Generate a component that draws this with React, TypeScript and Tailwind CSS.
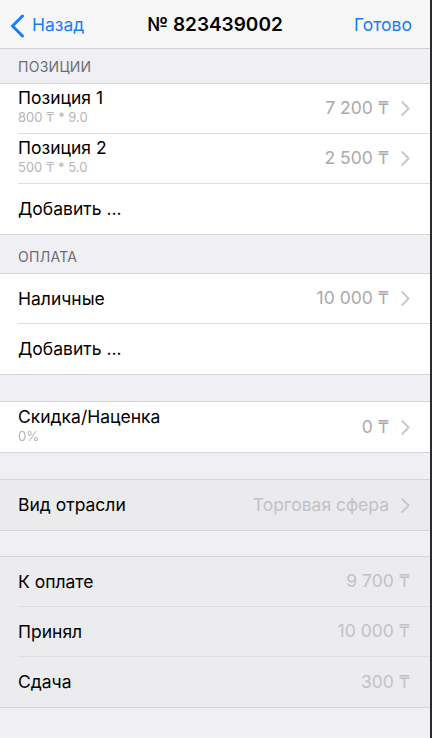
type Row = {
    title: string;
    subtitle?: string;
    value?: string;
    chevron?: boolean;
};

const Chevron = () => (
    <svg width="9" height="15" viewBox="0 0 9 15" className="ml-[12px] shrink-0" fill="none">
        <polyline points="1.2,1 7.6,7.5 1.2,14" stroke="#c7c7cc" strokeWidth="1.8" strokeLinecap="round" strokeLinejoin="round" />
    </svg>
);

const SectionHeader = ({ label, height }: { label: string; height: string }) => (
    <div className={`${height} flex items-end pb-[8px] px-[18px] text-[14px] leading-[17px] text-[#6d6d72] tracking-[0.02em]`}>
        {label}
    </div>
);

const Group = ({ rows, muted, bg = 'bg-white' }: { rows: Row[]; muted?: boolean; bg?: string }) => (
    <div className={`${bg} border-y border-[#d6d6da]`}>
        {rows.map((row, i) => (
            <div key={row.title + i} className="pl-[18px]">
                <div
                    className={`h-[50px] flex items-center pr-[20px] ${i < rows.length - 1 ? 'border-b border-[#dedee2]' : ''}`}
                >
                    <div className={`flex-1 min-w-0 ${row.subtitle ? 'pb-[4px]' : ''}`}>
                        <div className="text-[17.5px] leading-[20px] text-black">{row.title}</div>
                        {row.subtitle && (
                            <div className="mt-[2px] text-[13px] leading-[15px] text-[#b6b6ba]">{row.subtitle}</div>
                        )}
                    </div>
                    {row.value && (
                        <div className={`text-[17.5px] ${muted ? 'text-[#c2c2c6]' : 'text-[#a9a9ae]'}`}>{row.value}</div>
                    )}
                    {row.chevron && <Chevron />}
                </div>
            </div>
        ))}
    </div>
);

export default function App() {
    return (
        <div
            className="w-[432px] h-[738px] bg-[#efeff4] overflow-hidden border-r-2 border-[#2a2a2a]"
            style={{ fontFamily: "Inter, 'Noto Sans', sans-serif" }}
        >
            {/* Navigation bar */}
            <div className="h-[49px] bg-[#f7f7f8] border-b border-[#d0d0d4] flex items-center pt-[3px] px-[10px] relative">
                <div className="flex items-center text-[#157efb] text-[17.5px]">
                    <svg width="15" height="24" viewBox="0 0 15 24" fill="none" className="mr-[7px]">
                        <polyline points="12.5,2 2.5,12 12.5,22" stroke="#157efb" strokeWidth="3" strokeLinecap="round" strokeLinejoin="round" />
                    </svg>
                    <span>Назад</span>
                </div>
                <div className="absolute left-0 right-0 text-center text-[19px] font-semibold text-black pointer-events-none">
                    № 823439002
                </div>
                <div className="ml-auto text-[#157efb] text-[17.5px] pr-[8px]">Готово</div>
            </div>

            <SectionHeader label="ПОЗИЦИИ" height="h-[34px]" />
            <Group
                rows={[
                    { title: 'Позиция 1', subtitle: '800 ₸ * 9.0', value: '7 200 ₸', chevron: true },
                    { title: 'Позиция 2', subtitle: '500 ₸ * 5.0', value: '2 500 ₸', chevron: true },
                    { title: 'Добавить ...' },
                ]}
            />

            <SectionHeader label="ОПЛАТА" height="h-[38px]" />
            <Group
                rows={[
                    { title: 'Наличные', value: '10 000 ₸', chevron: true },
                    { title: 'Добавить ...' },
                ]}
            />

            <div className="h-[26px]" />
            <Group rows={[{ title: 'Скидка/Наценка', subtitle: '0%', value: '0 ₸', chevron: true }]} />

            <div className="h-[26px]" />
            <Group bg="bg-[#ebebed]" muted rows={[{ title: 'Вид отрасли', value: 'Торговая сфера', chevron: true }]} />

            <div className="h-[25px]" />
            <Group
                bg="bg-[#ececef]"
                muted
                rows={[
                    { title: 'К оплате', value: '9 700 ₸' },
                    { title: 'Принял', value: '10 000 ₸' },
                    { title: 'Сдача', value: '300 ₸' },
                ]}
            />
        </div>
    );
}
